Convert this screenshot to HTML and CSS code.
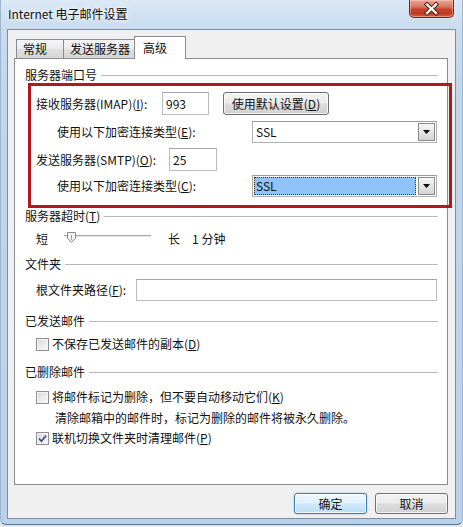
FILE: index.html
```html
<!DOCTYPE html>
<html lang="zh-CN">
<head>
<meta charset="utf-8">
<title>Internet 电子邮件设置</title>
<link rel="stylesheet" href="styles.css">
</head>
<body>
<div class="window">
  <div class="titlebar">
    <span class="title">Internet 电子邮件设置</span>
    <div class="close">
      <svg width="43" height="16" viewBox="0 0 43 16">
        <path d="M17 3.5 L26 12 M26 3.5 L17 12" stroke="#5a1a10" stroke-width="4.4" stroke-linecap="square" fill="none"/>
        <path d="M17 3.5 L26 12 M26 3.5 L17 12" stroke="#ffffff" stroke-width="2.4" stroke-linecap="square" fill="none"/>
      </svg>
    </div>
  </div>

  <div class="client">
    <div class="tabs">
      <div class="tab t-general">常规</div>
      <div class="tab t-outgoing">发送服务器</div>
      <div class="tab t-advanced active">高级</div>
    </div>

    <div class="panel">
      <div class="group-title">服务器端口号</div>

      <div class="row r-imap">
        <span class="lbl lbl-imap">接收服务器(IMAP)(<u>I</u>):</span>
        <div class="textbox port-in">993</div>
        <div class="btn btn-default-set">使用默认设置(<u>D</u>)</div>
      </div>

      <div class="row sub r-enc1">
        <span class="lbl lbl-enc">使用以下加密连接类型(<u>E</u>):</span>
        <div class="combo">
          <span class="combo-text">SSL</span>
          <span class="drop"><svg width="7" height="4" viewBox="0 0 7 4"><path d="M0 0 H7 L3.5 4 Z" fill="#000"/></svg></span>
        </div>
      </div>

      <div class="row r-smtp">
        <span class="lbl lbl-smtp">发送服务器(SMTP)(<u>O</u>):</span>
        <div class="textbox port-out">25</div>
      </div>

      <div class="row sub r-enc2">
        <span class="lbl lbl-enc">使用以下加密连接类型(<u>C</u>):</span>
        <div class="combo focused">
          <span class="combo-text">SSL</span>
          <span class="drop"><svg width="7" height="4" viewBox="0 0 7 4"><path d="M0 0 H7 L3.5 4 Z" fill="#000"/></svg></span>
        </div>
      </div>

      <div class="group-title g-timeout">服务器超时(<u>T</u>)</div>
      <div class="row r-slider">
        <span>短</span>
        <div class="slider">
          <svg class="thumb" width="10" height="11" viewBox="0 0 10 11">
            <path d="M0.5 0.5 H8.5 V6.5 L4.5 10.2 L0.5 6.5 Z" fill="#f2f2f2" stroke="#8a8a8a"/>
            <path d="M4.5 3 V8" stroke="#9a9a9a"/>
          </svg>
        </div>
        <span class="long">长</span>
        <span class="minute">1 分钟</span>
      </div>

      <div class="group-title g-folder">文件夹</div>
      <div class="row r-folder">
        <span class="lbl lbl-folder">根文件夹路径(<u>F</u>):</span>
        <div class="textbox path"></div>
      </div>

      <div class="group-title g-sent">已发送邮件</div>
      <div class="row r-cb1">
        <span class="checkbox"></span>
        <span class="cb-text">不保存已发送邮件的副本(<u>D</u>)</span>
      </div>

      <div class="group-title g-deleted">已删除邮件</div>
      <div class="row r-cb2">
        <span class="checkbox"></span>
        <span class="cb-text">将邮件标记为删除，但不要自动移动它们(<u>K</u>)</span>
      </div>
      <div class="row note">清除邮箱中的邮件时，标记为删除的邮件将被永久删除。</div>
      <div class="row r-cb3">
        <span class="checkbox checked">
          <svg width="11" height="11" viewBox="0 0 11 11"><path d="M2 5.5 L4.4 8.2 L9 2.6" stroke="#3b4f7e" stroke-width="1.7" fill="none"/></svg>
        </span>
        <span class="cb-text">联机切换文件夹时清理邮件(<u>P</u>)</span>
      </div>
    </div>

    <div class="buttons">
      <div class="btn dlg-btn primary">确定</div>
      <div class="btn dlg-btn">取消</div>
    </div>
  </div>

  <div class="highlight"></div>
</div>
</body>
</html>
```

FILE: styles.css
```css
* { box-sizing: border-box; }

html, body {
  margin: 0;
  padding: 0;
}

body {
  width: 463px;
  height: 527px;
  overflow: hidden;
  font-family: "Noto Sans CJK SC", "Microsoft YaHei", sans-serif;
  font-size: 12px;
  line-height: 16px;
  color: #111;
  background: #dfe9f4;
}

u { text-decoration: underline; text-underline-offset: 1px; }

.window {
  position: relative;
  height: 525px;
  display: flex;
  flex-direction: column;
  background: linear-gradient(to bottom, #dce8f5 0px, #cadcef 26px, #c0d6ec 90px, #bad1ea 100%);
  border-left: 1px solid #9db5cf;
  border-right: 1px solid #9db5cf;
  border-bottom: 1px solid #50708f;
  border-radius: 0 0 6px 6px;
}

/* title bar */
.titlebar {
  height: 29px;
  display: flex;
  justify-content: space-between;
  align-items: flex-start;
  padding-left: 7px;
  padding-right: 8px;
}

.title {
  margin-top: 6px;
  color: #0b0b0b;
  text-shadow: 0 0 6px #ffffff, 0 0 3px #ffffff;
}

.close {
  width: 45px;
  height: 18px;
  border: 1px solid #6e2a1e;
  border-top: none;
  border-radius: 0 0 5px 5px;
  background: linear-gradient(to bottom, #e9a999 0%, #d97562 40%, #c8442a 55%, #c0391f 80%, #d3674c 100%);
  box-shadow: inset 0 0 0 1px rgba(255, 210, 200, 0.45);
  display: flex;
  align-items: center;
  justify-content: center;
}

/* client area */
.client {
  margin-left: 6px;
  width: 449px;
  height: 490px;
  border: 1px solid #7f8fa1;
  background: #f0f0f0;
  padding: 6px 7px 0 6px;
  display: flex;
  flex-direction: column;
}

.tabs {
  position: relative;
  z-index: 1;
  height: 23px;
  margin-bottom: -1px;
  margin-left: 2px;
  display: flex;
  align-items: flex-end;
}

.tab {
  height: 20px;
  border: 1px solid #898c95;
  background: linear-gradient(to bottom, #f5f5f5 0%, #ececec 45%, #dedede 55%, #d6d6d6 100%);
  display: flex;
  align-items: center;
  padding-left: 6px;
  padding-bottom: 1px;
}

.t-general { width: 48px; }
.t-outgoing { width: 73px; margin-left: -1px; padding-left: 6px; }
.t-advanced { width: 52px; margin-left: -2px; }

.tab.active {
  height: 23px;
  background: #ffffff;
  border-bottom: none;
  padding-left: 8px;
  padding-bottom: 1px;
}

.panel {
  height: 427px;
  border: 1px solid #898c95;
  background: #ffffff;
  padding: 8px 9px 0 10px;
  display: flex;
  flex-direction: column;
}

.group-title {
  height: 16px;
  display: flex;
  align-items: center;
  white-space: nowrap;
}

.group-title::after {
  content: "";
  flex: 1;
  height: 1px;
  margin-left: 4px;
  background: #b9b9b9;
}

.row {
  display: flex;
  align-items: center;
  margin-left: 11px;
  white-space: nowrap;
}

.row.sub { margin-left: 32px; }

.lbl { flex: none; }
.lbl-imap { width: 126px; }
.lbl-smtp { width: 133px; }
.lbl-enc { width: 195px; }
.lbl-folder { width: 100px; }

.textbox {
  height: 23px;
  border: 1px solid #b9bcc4;
  border-top-color: #a3a6ad;
  background: #fff;
  padding-left: 3px;
  display: flex;
  align-items: center;
}

.port-in { width: 47px; }
.port-out { width: 48px; }
.path { width: 301px; height: 22px; }

.btn {
  border: 1px solid #707070;
  border-radius: 3px;
  background: linear-gradient(to bottom, #f3f3f3 0%, #ebebeb 48%, #dddddd 52%, #d0d0d0 100%);
  box-shadow: inset 0 0 0 1px rgba(255, 255, 255, 0.7);
  display: flex;
  align-items: center;
  justify-content: center;
}

.btn-default-set {
  width: 106px;
  height: 23px;
  margin-left: 14px;
}

/* combo box */
.combo {
  width: 185px;
  height: 22px;
  border: 1px solid #b0b0b0;
  border-top-color: #9a9a9a;
  background: #fff;
  padding: 1px 1px 1px 1px;
  display: flex;
  align-items: stretch;
}

.combo-text {
  flex: 1;
  padding-left: 2px;
  display: flex;
  align-items: center;
  margin-right: 2px;
}

.combo.focused .combo-text {
  background: #90c3f7;
  outline: 1px dotted #3a3a3a;
  outline-offset: -1px;
}

.drop {
  width: 17px;
  border: 1px solid #8a8a8a;
  background: linear-gradient(to bottom, #f6f6f6 0%, #e6e6e6 50%, #d4d4d4 100%);
  display: flex;
  align-items: center;
  justify-content: center;
}

/* vertical rhythm */
.r-imap { height: 23px; margin-top: 9px; }
.r-enc1 { height: 22px; margin-top: 6px; }
.r-smtp { height: 23px; margin-top: 5px; }
.r-enc2 { height: 22px; margin-top: 4px; }
.g-timeout { margin-top: 11px; }
.r-slider { height: 18px; margin-top: 6px; }
.g-folder { margin-top: 8px; }
.r-folder { height: 22px; margin-top: 7px; }
.g-sent { margin-top: 12px; }
.r-cb1 { height: 16px; margin-top: 7px; }
.g-deleted { margin-top: 12px; }
.r-cb2 { height: 16px; margin-top: 9px; }
.note { height: 16px; margin-top: 5px; margin-left: 30px; }
.r-cb3 { height: 16px; margin-top: 4px; }

/* slider */
.slider {
  width: 87px;
  height: 18px;
  margin-left: 16px;
  display: flex;
  align-items: flex-start;
  padding-top: 2px;
  background:
    linear-gradient(#a9a9a9, #a9a9a9) 0 5px / 100% 1px no-repeat,
    linear-gradient(#e6e6e6, #e6e6e6) 0 6px / 100% 1px no-repeat;
}

.thumb { margin-left: 3px; }

.long { margin-left: 17px; }
.minute { margin-left: 12px; }

/* checkbox */
.checkbox {
  width: 13px;
  height: 13px;
  flex: none;
  border: 1px solid #8e8f8f;
  background: linear-gradient(135deg, #d6d8dc 0%, #eeeeee 60%, #fafafa 100%);
  box-shadow: inset 0 0 0 1px #f4f4f4;
  display: flex;
  align-items: center;
  justify-content: center;
}

.cb-text { margin-left: 3px; }

/* dialog buttons */
.buttons {
  display: flex;
  justify-content: flex-end;
  gap: 8px;
  margin-top: 8px;
}

.dlg-btn {
  width: 73px;
  height: 21px;
}

.dlg-btn.primary {
  border-color: #3c7fb1;
  background: linear-gradient(to bottom, #eef7fd 0%, #e1f1fc 48%, #cfe8f9 52%, #bcdef5 100%);
  box-shadow: inset 0 0 0 1px rgba(255, 255, 255, 0.8), 0 0 2px rgba(80, 160, 220, 0.6);
}

/* annotation box drawn over the screenshot */
.highlight {
  position: absolute;
  left: 27px;
  top: 83px;
  width: 424px;
  height: 125px;
  border: 3px solid #b3171f;
  pointer-events: none;
}
```
